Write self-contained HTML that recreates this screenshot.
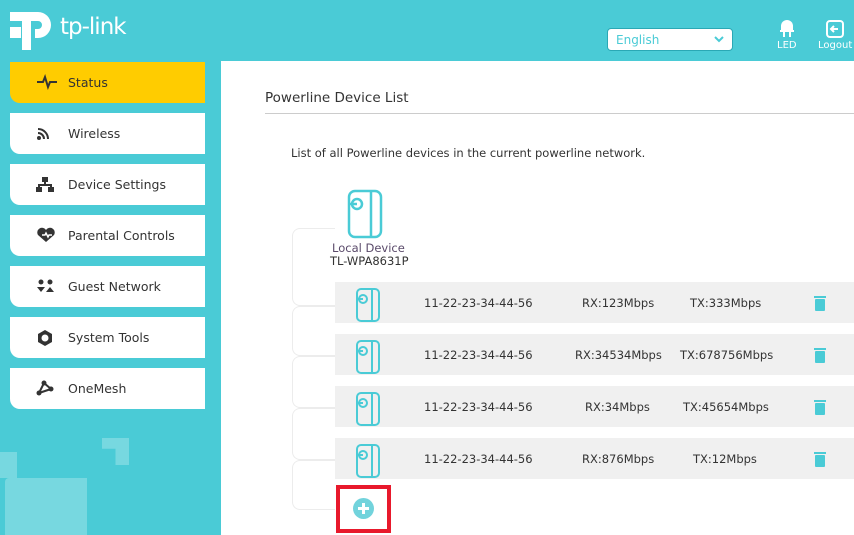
<!DOCTYPE html>
<html><head><meta charset="utf-8"><style>
*{margin:0;padding:0;box-sizing:border-box}
body{width:854px;height:535px;overflow:hidden;background:#4acbd6;font-family:"DejaVu Sans","Liberation Sans",sans-serif;position:relative;font-size:12.5px;color:#333}
.main{position:absolute;left:221px;top:61px;width:633px;height:474px;background:#fff}
.menu{position:absolute;left:10px;width:195px;height:41px;background:#fff;border-radius:0 0 0 10px;}
.menu span{position:absolute;left:58px;top:13px;font-size:12.5px;color:#333}
.menu svg{position:absolute;left:26px;top:12px}
.row{position:absolute;left:335px;width:519px;height:41px;background:#f0f0f0;font-size:11.5px;color:#333}
.row div{position:absolute;top:14px}
.deco{position:absolute;background:rgba(255,255,255,0.25)}
.tree{position:absolute;left:292px;width:43px;border:1px solid #ececec;border-right:none;border-radius:8px 0 0 8px}
</style></head><body>
<svg style="position:absolute;left:9px;top:5px" width="48" height="46" viewBox="0 0 48 46">
<path d="M13 7h16a13 13 0 0 1 0 26h-3v-9h3a4 4 0 0 0 0-8h-7v29h-9V16H1v-9z" fill="#fff"/>
<rect x="1" y="22" width="11" height="11" fill="#fff"/>
</svg>
<div style="position:absolute;left:60px;top:14px;color:#fff;font-size:23px;font-family:'DejaVu Sans',sans-serif;letter-spacing:-1px">tp-link</div>
<div style="position:absolute;left:607px;top:28px;width:126px;height:23px;background:#fff;border:1px solid #2aa8b5;border-radius:4px;color:#4acbd6;font-size:12px;padding:4px 8px">English<svg style="position:absolute;right:8px;top:7px" width="10" height="7" viewBox="0 0 10 7"><path d="M1 1l4 4 4-4" stroke="#4acbd6" stroke-width="2" fill="none"/></svg></div>
<svg style="position:absolute;left:778px;top:18px" width="18" height="20" viewBox="0 0 18 20"><path d="M3 12V8a6 6 0 0 1 12 0v4z" fill="#fff"/><rect x="2" y="12" width="14" height="2" fill="#fff"/><rect x="5" y="14" width="2" height="5" fill="#fff"/><rect x="11" y="14" width="2" height="5" fill="#fff"/></svg>
<div style="position:absolute;left:777px;top:40px;color:#fff;font-size:10px">LED</div>
<svg style="position:absolute;left:825px;top:19px" width="20" height="20" viewBox="0 0 20 20"><rect x="2" y="2" width="16" height="16" rx="3" fill="none" stroke="#fff" stroke-width="2"/><path d="M13 10H6M9 7l-3 3 3 3" stroke="#fff" stroke-width="2" fill="none"/></svg>
<div style="position:absolute;left:818px;top:40px;color:#fff;font-size:10px">Logout</div>
<div class="deco" style="left:102px;top:438px;width:27px;height:27px;clip-path:polygon(0 0,100% 0,100% 100%,50% 100%,50% 40%,0 40%)"></div>
<div class="deco" style="left:0;top:452px;width:17px;height:26px"></div>
<div class="deco" style="left:5px;top:478px;width:82px;height:57px;border-radius:4px 0 0 0"></div>
<div class="menu" style="top:62px;background:#ffcc00"><svg width="22" height="16" viewBox="0 0 22 16"><path d="M1 8h6l2-5 3 10 2-5h7" stroke="#333" stroke-width="2" fill="none"/></svg><span>Status</span></div>
<div class="menu" style="top:113px"><svg width="16" height="16" viewBox="0 0 16 16"><path d="M2 4a10 10 0 0 1 10 10M2 8a6 6 0 0 1 6 6" stroke="#333" stroke-width="2" fill="none"/><circle cx="3" cy="13" r="2" fill="#333"/></svg><span>Wireless</span></div>
<div class="menu" style="top:164px"><svg width="18" height="16" viewBox="0 0 18 16"><rect x="6" y="1" width="6" height="5" fill="#333"/><path d="M9 6v3M3 12V9h12v3" stroke="#333" stroke-width="2" fill="none"/><rect x="0" y="11" width="6" height="5" fill="#333"/><rect x="12" y="11" width="6" height="5" fill="#333"/></svg><span>Device Settings</span></div>
<div class="menu" style="top:215px"><svg width="20" height="16" viewBox="0 0 20 16"><path d="M10 15L2 8a4.5 4.5 0 0 1 8-5 4.5 4.5 0 0 1 8 5z" fill="#333"/><path d="M6 8h3l1-2 2 4 1-2h3" stroke="#fff" stroke-width="1.5" fill="none"/></svg><span>Parental Controls</span></div>
<div class="menu" style="top:266px"><svg width="20" height="16" viewBox="0 0 20 16"><circle cx="5" cy="4" r="2.5" fill="#333"/><circle cx="14" cy="4" r="2.5" fill="#333"/><path d="M1 9l4 5 4-5zM10 14l4-5 4 5z" fill="#333"/></svg><span>Guest Network</span></div>
<div class="menu" style="top:317px"><svg width="18" height="18" viewBox="0 0 18 18"><path d="M9 1l7 4v8l-7 4-7-4V5z" fill="#333"/><circle cx="9" cy="9" r="3.5" fill="#fff"/></svg><span>System Tools</span></div>
<div class="menu" style="top:368px"><svg width="18" height="16" viewBox="0 0 18 16"><path d="M8 3L3 13M8 3l7 6M3 13l12-4" stroke="#333" stroke-width="2"/><circle cx="8" cy="3" r="2.5" fill="#333"/><circle cx="3" cy="13" r="2.5" fill="#333"/><circle cx="15" cy="9" r="2.5" fill="#333"/></svg><span>OneMesh</span></div>
<div class="main"></div>
<div style="position:absolute;left:265px;top:90px;font-size:13.5px;color:#333">Powerline Device List</div>
<div style="position:absolute;left:265px;top:113px;width:589px;height:1px;background:#ccc"></div>
<div style="position:absolute;left:291px;top:146px;font-size:11.5px;color:#333">List of all Powerline devices in the current powerline network.</div>
<svg style="position:absolute;left:346px;top:189px" width="38" height="50" viewBox="0 0 38 50"><rect x="3" y="2" width="32" height="46" rx="6" fill="none" stroke="#4acbd6" stroke-width="2.5"/><path d="M25 3v44" stroke="#4acbd6" stroke-width="2.5"/><circle cx="11" cy="15" r="5" fill="none" stroke="#4acbd6" stroke-width="2.5"/><path d="M4 15h7" stroke="#4acbd6" stroke-width="2.5"/></svg>
<div style="position:absolute;left:332px;top:241px;font-size:11.5px;color:#5a4a6a">Local Device</div>
<div style="position:absolute;left:330px;top:254px;font-size:11.5px;color:#333">TL-WPA8631P</div>
<div class="tree" style="top:228px;height:78px"></div>
<div class="tree" style="top:306px;height:50px"></div>
<div class="tree" style="top:356px;height:52px"></div>
<div class="tree" style="top:408px;height:52px"></div>
<div class="tree" style="top:460px;height:50px"></div>
<div class="row" style="top:282px"><div style="left:89px">11-22-23-34-44-56</div><div style="left:247px">RX:123Mbps</div><div style="left:355px">TX:333Mbps</div></div>
<div class="row" style="top:334px"><div style="left:240px">RX:34534Mbps</div><div style="left:89px">11-22-23-34-44-56</div><div style="left:345px">TX:678756Mbps</div></div>
<div class="row" style="top:386px"><div style="left:89px">11-22-23-34-44-56</div><div style="left:250px">RX:34Mbps</div><div style="left:348px">TX:45654Mbps</div></div>
<div class="row" style="top:438px"><div style="left:89px">11-22-23-34-44-56</div><div style="left:247px">RX:876Mbps</div><div style="left:358px">TX:12Mbps</div></div>
<svg style="display:none"><symbol id="d" viewBox="0 0 26 34"><rect x="2" y="1" width="22" height="32" rx="4" fill="none" stroke="#4acbd6" stroke-width="2"/><path d="M17 2v30" stroke="#4acbd6" stroke-width="2"/><circle cx="8" cy="11" r="4" fill="none" stroke="#4acbd6" stroke-width="2"/><path d="M3 11h5" stroke="#4acbd6" stroke-width="2"/></symbol>
<symbol id="t" viewBox="0 0 12 16"><rect x="0" y="1" width="12" height="2" fill="#4acbd6"/><rect x="1" y="4" width="10" height="12" rx="1" fill="#4acbd6"/></symbol></svg>
<svg style="position:absolute;left:355px;top:288px" width="26" height="34"><use href="#d"/></svg>
<svg style="position:absolute;left:355px;top:340px" width="26" height="34"><use href="#d"/></svg>
<svg style="position:absolute;left:355px;top:392px" width="26" height="34"><use href="#d"/></svg>
<svg style="position:absolute;left:355px;top:444px" width="26" height="34"><use href="#d"/></svg>
<svg style="position:absolute;left:814px;top:295px" width="12" height="16"><use href="#t"/></svg>
<svg style="position:absolute;left:814px;top:347px" width="12" height="16"><use href="#t"/></svg>
<svg style="position:absolute;left:814px;top:399px" width="12" height="16"><use href="#t"/></svg>
<svg style="position:absolute;left:814px;top:451px" width="12" height="16"><use href="#t"/></svg>
<div style="position:absolute;left:336px;top:485px;width:55px;height:48px;border:4px solid #e8192c"></div>
<svg style="position:absolute;left:353px;top:498px" width="21" height="21" viewBox="0 0 21 21"><circle cx="10.5" cy="10.5" r="10.5" fill="#72d3dc"/><path d="M10.5 5v11M5 10.5h11" stroke="#fff" stroke-width="3"/></svg>
</body></html>
